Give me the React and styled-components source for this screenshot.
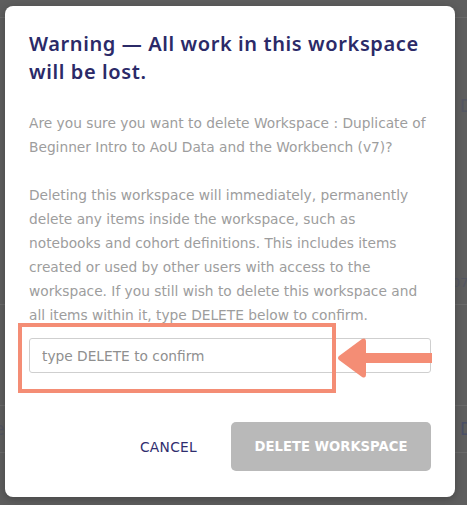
import React from 'react'
import styled, {createGlobalStyle} from 'styled-components'

const GlobalStyle = createGlobalStyle`
  html, body {
    margin: 0;
    padding: 0;
    background: #5e5e5e;
  }
  body {
    font-family: "DejaVu Sans", "Noto Sans", sans-serif;
  }
`

const Page = styled.div`
  position: relative;
  width: 467px;
  height: 505px;
  overflow: hidden;
  background: #5e5e5e;
`

// faded table that sits behind the overlay
const Backdrop = styled.div`
  display: flex;
  flex-direction: column;
  padding-top: 17px;
`

const BackRow = styled.div`
  height: ${props => props.h}px;
  border-top: 1px solid #6a6a6a;
  display: flex;
  align-items: ${props => props.align || 'center'};
  justify-content: space-between;
  color: #4a4f66;
  font-size: 17px;
`

const BackCell = styled.span`
  opacity: ${props => props.faint ? 0.5 : 1};
  font-size: ${props => props.size || 17}px;
  margin-right: ${props => props.right || -6}px;
  margin-left: ${props => props.left || 0}px;
`

const Modal = styled.div`
  position: absolute;
  top: 6px;
  left: 5px;
  width: 450px;
  height: 491px;
  box-sizing: border-box;
  background: #fff;
  border-radius: 8px;
  box-shadow: 0 2px 8px rgba(0, 0, 0, 0.25);
  padding: 24px 24px 0 24px;
  display: flex;
  flex-direction: column;
`

const Title = styled.h2`
  margin: 0;
  font-family: "Noto Sans", "DejaVu Sans", sans-serif;
  font-size: 20px;
  font-weight: 600;
  letter-spacing: 0.6px;
  line-height: 28px;
  color: #2b2a68;
  white-space: nowrap;
`

const Body = styled.p`
  margin: ${props => props.top}px 0 0 0;
  font-size: 13.75px;
  line-height: 24px;
  color: #9d9d9d;
  white-space: nowrap;
`

const ConfirmRow = styled.div`
  position: relative;
  margin-top: 11px;
`

const Input = styled.input`
  display: block;
  width: 100%;
  height: 35px;
  box-sizing: border-box;
  border: 1px solid #cfcfcf;
  border-radius: 3px;
  padding: 0 12px;
  font-family: inherit;
  font-size: 13.75px;
  color: #555;
  outline: none;

  &::placeholder {
    color: #8f8f8f;
  }
`

// annotation drawn over the dialog
const Highlight = styled.div`
  position: absolute;
  left: -11px;
  top: -15px;
  width: 318px;
  height: 70px;
  box-sizing: border-box;
  border: 4px solid #f48d75;
  pointer-events: none;
`

const Arrow = styled.svg`
  position: absolute;
  left: 307px;
  top: -1px;
  pointer-events: none;
`

const Footer = styled.div`
  display: flex;
  justify-content: flex-end;
  align-items: center;
  gap: 34px;
  margin-top: 49px;
`

const TextButton = styled.button`
  background: none;
  border: none;
  padding: 0;
  font-family: inherit;
  font-size: 13.75px;
  letter-spacing: 0.3px;
  color: #2f2d6e;
  text-transform: uppercase;
  cursor: pointer;
`

const PrimaryButton = styled.button`
  width: 200px;
  height: 49px;
  border: none;
  border-radius: 5px;
  background: ${props => props.disabled ? '#b9b9b9' : '#262262'};
  color: #fff;
  font-family: inherit;
  font-size: 13.2px;
  font-weight: 600;
  text-transform: uppercase;
`

const App = () => (
  <Page>
    <GlobalStyle />
    <Backdrop>
      <BackRow h={286} align='flex-start'>
        <span />
        <BackCell faint style={{marginTop: 78}}>D</BackCell>
      </BackRow>
      <BackRow h={100} align='flex-start'>
        <span />
        <BackCell faint size={13} style={{marginTop: -30}}>07/</BackCell>
      </BackRow>
      <BackRow h={46}>
        <BackCell faint left={-6}>e</BackCell>
        <BackCell>D</BackCell>
      </BackRow>
      <BackRow h={60} />
    </Backdrop>

    <Modal>
      <Title>
        Warning — All work in this workspace<br />
        will be lost.
      </Title>
      <Body top={25}>
        Are you sure you want to delete Workspace : Duplicate of<br />
        Beginner Intro to AoU Data and the Workbench (v7)?
      </Body>
      <Body top={24}>
        Deleting this workspace will immediately, permanently<br />
        delete any items inside the workspace, such as<br />
        notebooks and cohort definitions. This includes items<br />
        created or used by other users with access to the<br />
        workspace. If you still wish to delete this workspace and<br />
        all items within it, type DELETE below to confirm.
      </Body>
      <ConfirmRow>
        <Input placeholder='type DELETE to confirm' />
        <Highlight />
        <Arrow width='96' height='42' viewBox='0 0 96 42'>
          <path d='M30 16 H96 V26 H30 Z' fill='#f48d75' />
          <path d='M26 2 Q30 0 30 5 V37 Q30 42 26 40 L3 23 Q1 21 3 19 Z' fill='#f48d75' />
        </Arrow>
      </ConfirmRow>
      <Footer>
        <TextButton>Cancel</TextButton>
        <PrimaryButton disabled>Delete Workspace</PrimaryButton>
      </Footer>
    </Modal>
  </Page>
)

export default App
